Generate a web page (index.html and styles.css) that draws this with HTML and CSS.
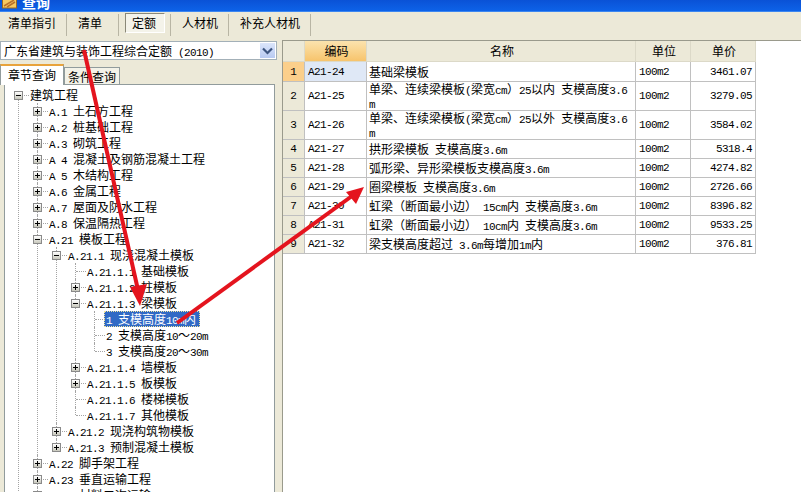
FILE: index.html
```html
<!DOCTYPE html>
<html lang="zh-CN">
<head>
  <meta charset="UTF-8">
  <title>查询</title>
  <link rel="stylesheet" href="styles.css">
</head>
<body>
  <div class="titlebar">
    <svg class="title-icon" width="15" height="12" viewBox="0 0 15 12">
      <rect x="0.5" y="-3" width="14" height="11" fill="#f6c860" stroke="#9a6a20"/>
      <path d="M2 6 L12 0 M5 7 L13 2" stroke="#b8702a" stroke-width="1.5"/>
    </svg>
    <span class="title-text">查询</span>
  </div>

  <div class="toolbar">
    <div class="tool first">清单指引</div>
    <div class="tool wide">清单</div>
    <div class="tool pressed"><span>定额</span></div>
    <div class="tool">人材机</div>
    <div class="tool">补充人材机</div>
  </div>

  <div class="main">
    <div class="left">
      <div class="combo">
        <span class="combo-text">广东省建筑与装饰工程综合定额<span class="l"> (2010)</span></span>
        <span class="combo-btn">
          <svg width="11" height="8" viewBox="0 0 11 8"><path d="M1 1.5 L5.5 6 L10 1.5" fill="none" stroke="#3d5580" stroke-width="2.2"/></svg>
        </span>
      </div>
      <div class="tabs">
        <div class="tab active">章节查询</div>
        <div class="tab">条件查询</div>
      </div>
      <div class="tree-panel">
        <ul class="tree">
          <li class="root">
            <div class="row"><i class="box"></i>建筑工程</div>
            <ul>
              <li><div class="row"><i class="box plus"></i><span class="l">A.1 </span>土石方工程</div></li>
              <li><div class="row"><i class="box plus"></i><span class="l">A.2 </span>桩基础工程</div></li>
              <li><div class="row"><i class="box plus"></i><span class="l">A.3 </span>砌筑工程</div></li>
              <li><div class="row"><i class="box plus"></i><span class="l">A 4 </span>混凝土及钢筋混凝土工程</div></li>
              <li><div class="row"><i class="box plus"></i><span class="l">A 5 </span>木结构工程</div></li>
              <li><div class="row"><i class="box plus"></i><span class="l">A.6 </span>金属工程</div></li>
              <li><div class="row"><i class="box plus"></i><span class="l">A.7 </span>屋面及防水工程</div></li>
              <li><div class="row"><i class="box plus"></i><span class="l">A.8 </span>保温隔热工程</div></li>
              <li>
                <div class="row"><i class="box"></i><span class="l">A.21 </span>模板工程</div>
                <ul>
                  <li>
                    <div class="row"><i class="box"></i><span class="l">A.21.1 </span>现浇混凝土模板</div>
                    <ul>
                      <li><div class="row"><span class="l">A.21.1.1 </span>基础模板</div></li>
                      <li><div class="row"><i class="box plus"></i><span class="l">A.21.1.2 </span>柱模板</div></li>
                      <li>
                        <div class="row"><i class="box"></i><span class="l">A.21.1.3 </span>梁模板</div>
                        <ul>
                          <li><div class="row"><span class="sel"><span class="l">1 </span>支模高度<span class="l">10m</span>内</span></div></li>
                          <li><div class="row"><span class="l">2 </span>支模高度<span class="l">10</span>～<span class="l">20m</span></div></li>
                          <li><div class="row"><span class="l">3 </span>支模高度<span class="l">20</span>～<span class="l">30m</span></div></li>
                        </ul>
                      </li>
                      <li><div class="row"><i class="box plus"></i><span class="l">A.21.1.4 </span>墙模板</div></li>
                      <li><div class="row"><i class="box plus"></i><span class="l">A.21.1.5 </span>板模板</div></li>
                      <li><div class="row"><span class="l">A.21.1.6 </span>楼梯模板</div></li>
                      <li><div class="row"><span class="l">A.21.1.7 </span>其他模板</div></li>
                    </ul>
                  </li>
                  <li><div class="row"><i class="box plus"></i><span class="l">A.21.2 </span>现浇构筑物模板</div></li>
                  <li><div class="row"><i class="box plus"></i><span class="l">A.21.3 </span>预制混凝土模板</div></li>
                </ul>
              </li>
              <li><div class="row"><i class="box plus"></i><span class="l">A.22 </span>脚手架工程</div></li>
              <li><div class="row"><i class="box plus"></i><span class="l">A.23 </span>垂直运输工程</div></li>
              <li><div class="row"><i class="box plus"></i><span class="l">A.24 </span>材料二次运输</div></li>
            </ul>
          </li>
        </ul>
      </div>
    </div>

    <div class="right">
      <table class="grid">
        <colgroup>
          <col class="c-num"><col class="c-code"><col class="c-name"><col class="c-unit"><col class="c-price">
        </colgroup>
        <thead>
          <tr>
            <th></th>
            <th class="sorted">编码</th>
            <th>名称</th>
            <th>单位</th>
            <th>单价</th>
          </tr>
        </thead>
        <tbody>
          <tr class="h20">
            <td class="num current">1</td><td class="code active-cell l">A21-24</td><td>基础梁模板</td>
            <td class="unit l">100m2</td><td class="price l">3461.07</td>
          </tr>
          <tr class="h28">
            <td class="num">2</td><td class="code l">A21-25</td>
            <td class="wrap">单梁、连续梁模板<span class="l">(</span>梁宽<span class="l">cm</span>）<span class="l">25</span>以内<span class="l"> </span>支模高度<span class="l">3.6<br>m</span></td>
            <td class="unit l">100m2</td><td class="price l">3279.05</td>
          </tr>
          <tr class="h29">
            <td class="num">3</td><td class="code l">A21-26</td>
            <td class="wrap">单梁、连续梁模板<span class="l">(</span>梁宽<span class="l">cm</span>）<span class="l">25</span>以外<span class="l"> </span>支模高度<span class="l">3.6<br>m</span></td>
            <td class="unit l">100m2</td><td class="price l">3584.02</td>
          </tr>
          <tr>
            <td class="num">4</td><td class="code l">A21-27</td><td>拱形梁模板<span class="l"> </span>支模高度<span class="l">3.6m</span></td>
            <td class="unit l">100m2</td><td class="price l">5318.4</td>
          </tr>
          <tr>
            <td class="num">5</td><td class="code l">A21-28</td><td>弧形梁、异形梁模板支模高度<span class="l">3.6m</span></td>
            <td class="unit l">100m2</td><td class="price l">4274.82</td>
          </tr>
          <tr>
            <td class="num">6</td><td class="code l">A21-29</td><td>圈梁模板<span class="l"> </span>支模高度<span class="l">3.6m</span></td>
            <td class="unit l">100m2</td><td class="price l">2726.66</td>
          </tr>
          <tr>
            <td class="num">7</td><td class="code l">A21-30</td><td>虹梁（断面最小边）<span class="l"> 15cm</span>内<span class="l"> </span>支模高度<span class="l">3.6m</span></td>
            <td class="unit l">100m2</td><td class="price l">8396.82</td>
          </tr>
          <tr>
            <td class="num">8</td><td class="code l">A21-31</td><td>虹梁（断面最小边）<span class="l"> 10cm</span>内<span class="l"> </span>支模高度<span class="l">3.6m</span></td>
            <td class="unit l">100m2</td><td class="price l">9533.25</td>
          </tr>
          <tr>
            <td class="num">9</td><td class="code l">A21-32</td><td>梁支模高度超过<span class="l"> 3.6m</span>每增加<span class="l">1m</span>内</td>
            <td class="unit l">100m2</td><td class="price l">376.81</td>
          </tr>
        </tbody>
      </table>
    </div>
  </div>

  <!-- hand drawn red arrows on top of the window -->
  <svg class="arrows" width="801" height="492" viewBox="0 0 801 492">
    <path d="M84 50 L138 290" stroke="#e4141e" stroke-width="4" fill="none"/>
    <path d="M140 306 L130 287 L147 284 Z" fill="#e4141e"/>
    <path d="M177 323 L352 196" stroke="#e4141e" stroke-width="4" fill="none"/>
    <path d="M364 187 L346 192 L356 204 Z" fill="#e4141e"/>
  </svg>
</body>
</html>
```

FILE: styles.css
```css
* {
  box-sizing: border-box;
}
html, body {
  margin: 0;
  height: 100%;
}
body {
  position: relative;
  width: 801px;
  height: 492px;
  overflow: hidden;
  display: flex;
  flex-direction: column;
  background: #ece9d8;
  color: #000;
  font-family: "Noto Sans CJK SC", "Liberation Sans", sans-serif;
  font-size: 12px;
  text-spacing-trim: space-all;
}
/* latin text is half the width of the chinese text */
.l {
  font-family: "Liberation Mono", monospace;
  font-size: 11px;
  letter-spacing: -0.6px;
  line-height: 10px;
  white-space: pre;
}

.titlebar {
  height: 12px;
  flex: none;
  display: flex;
  overflow: hidden;
  background: linear-gradient(#0a52d6, #0d62e8);
  border-bottom: 1px solid #3c86f0;
}
.title-icon {
  margin-left: 2px;
  flex: none;
}
.title-text {
  margin: -8px 0 0 5px;
  height: 20px;
  line-height: 20px;
  font-size: 14px;
  font-weight: bold;
  color: #fff;
}

.toolbar {
  height: 28px;
  flex: none;
  display: flex;
  padding-bottom: 4px;
  align-items: stretch;
}
.tool {
  padding: 0 10px 0 11px;
  margin: 2px 0 0;
  line-height: 18px;
  border-right: 1px solid #b8b5a4;
}
.tool.first {
  padding-left: 8px;
}
.tool.wide {
  width: 52px;
}
.tool.pressed {
  width: 52px;
  padding: 0 0 0 6px;
}
.tool.pressed span {
  display: block;
  width: 40px;
  height: 20px;
  padding-left: 6px;
  line-height: 18px;
  margin-top: -1px;
  background: #f4f3ea;
  border: 1px solid;
  border-color: #8a8878 #fff #fff #8a8878;
}

.main {
  flex: 1;
  display: flex;
  min-height: 0;
}
.left {
  width: 282px;
  flex: none;
  padding-top: 1px;
}
.combo {
  width: 277px;
  height: 19px;
  display: flex;
  align-items: center;
  justify-content: space-between;
  background: #fff;
  border: 1px solid #a3b0b8;
  padding: 0 1px 0 3px;
}
.combo-text {
  line-height: 17px;
}
.combo-btn {
  width: 15px;
  height: 15px;
  display: flex;
  align-items: center;
  justify-content: center;
  background: linear-gradient(#dbe5fa, #b8caf2);
}

.tabs {
  display: flex;
  height: 22px;
  margin-top: 2px;
  align-items: flex-end;
}
.tab {
  width: 56px;
  height: 17px;
  line-height: 18px;
  text-align: center;
  background: #f3f2e8;
  border: 1px solid #919b9c;
  border-bottom: 0;
}
.tab.active {
  width: 64px;
  height: 21px;
  line-height: 17px;
  background: #fff;
  border-top: 2px solid #e8a33c;
  position: relative;
  z-index: 1;
  margin-bottom: -1px;
}

.tree-panel {
  margin-left: 4px;
  width: 271px;
  height: 420px;
  overflow: hidden;
  background: #fff;
  border: 1px solid #919b9c;
}
.tree, .tree ul {
  list-style: none;
  margin: 0;
  padding: 0;
}
.tree {
  padding: 2px 0 0 13px;
}
.tree ul {
  padding-left: 19px;
}
.tree li {
  position: relative;
}
/* dotted guide lines */
.tree li::before {
  content: "";
  position: absolute;
  left: 0;
  top: 0;
  bottom: 0;
  border-left: 1px dotted #a4a4a4;
}
.tree li:last-child::before {
  bottom: auto;
  height: 8px;
}
.tree li.root::before {
  top: 8px;
  bottom: 0;
  height: auto;
}
.row {
  position: relative;
  height: 16px;
  line-height: 16px;
  padding-left: 12px;
  white-space: nowrap;
}
.row::before {
  content: "";
  position: absolute;
  left: 1px;
  top: 8px;
  width: 10px;
  border-top: 1px dotted #a4a4a4;
}
.box {
  position: absolute;
  left: -4px;
  top: 4px;
  width: 9px;
  height: 9px;
  z-index: 1;
  border: 1px solid #8a8a8a;
  background: linear-gradient(#fff, #c8c8bc);
}
.box::before {
  content: "";
  position: absolute;
  left: 1px;
  top: 3px;
  width: 5px;
  height: 1px;
  background: #000;
}
.box.plus::after {
  content: "";
  position: absolute;
  left: 3px;
  top: 1px;
  width: 1px;
  height: 5px;
  background: #000;
}
.sel {
  display: inline-block;
  height: 16px;
  margin-left: -2px;
  padding: 0 4px 0 2px;
  color: #fff;
  background: #316ac5;
  outline: 1px dotted #f2e6a0;
  outline-offset: -1px;
}

.right {
  flex: 1;
  background: #fff;
  border-left: 1px solid #9a9a8c;
  border-top: 1px solid #9a9a8c;
}
.grid {
  table-layout: fixed;
  width: 473px;
  border-collapse: separate;
  border-spacing: 0;
}
.c-num { width: 22px; }
.c-code { width: 62px; }
.c-name { width: 269px; }
.c-unit { width: 55px; }
.c-price { width: 65px; }
.grid th, .grid td {
  height: 19px;
  padding: 0 0 0 2px;
  border-right: 1px solid #c0c0c0;
  border-bottom: 1px solid #c0c0c0;
  line-height: 16px;
  white-space: nowrap;
  overflow: hidden;
}
.grid th {
  height: 21px;
  font-weight: normal;
  text-align: center;
  background: #ece9d8;
  border-color: #dcd9c8;
}
.grid th.sorted {
  background: linear-gradient(#fbe3ae, #f7c46c);
}
.h20 td { height: 20px; }
.h28 td { height: 28px; }
.h29 td { height: 29px; }
.grid td.wrap {
  line-height: 13px;
}
.grid td.num {
  padding: 0;
  text-align: center;
  background: #ece9d8;
  font-family: "Liberation Mono", monospace;
  font-size: 11px;
}
.grid td.num.current {
  background: #fbcf8b;
}
.grid td.code {
  padding-left: 3px;
}
.grid td.active-cell {
  background: #dfe8f6;
}
.grid td.unit {
  padding-left: 3px;
}
.grid td.price {
  padding: 0 3px 0 0;
  text-align: right;
}

.arrows {
  position: absolute;
  left: 0;
  top: 0;
  pointer-events: none;
}
```
